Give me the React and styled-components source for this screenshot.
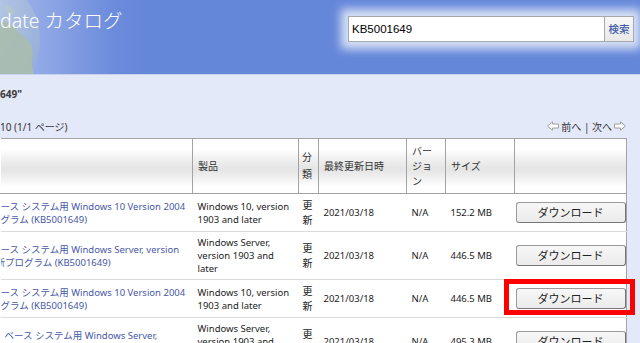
import React from 'react';
import styled, { createGlobalStyle } from 'styled-components';

const GlobalStyle = createGlobalStyle`
  html, body {
    margin: 0;
    padding: 0;
    background: #e3e9f9;
    overflow: hidden;
  }
  body {
    font-family: "Noto Sans", "Noto Sans CJK JP", sans-serif;
    color: #333;
  }
`;

const Page = styled.div`
  width: 640px;
  height: 343px;
  overflow: hidden;
`;

const Header = styled.div`
  position: relative;
  height: 74px;
  display: flex;
  justify-content: space-between;
  align-items: flex-start;
  background: linear-gradient(90deg, #a2b6e9 0px, #8ca5e4 50px, #6b8bdb 115px, #6587da 145px);
  border-bottom: 1px solid #c7d3f1;
`;

const Globe = styled.svg`
  position: absolute;
  left: 0;
  top: 0;
`;

const Title = styled.h1`
  position: relative;
  margin: 7px 0 0 0;
  font-family: "Noto Sans", "Noto Sans CJK JP", sans-serif;
  font-weight: 300;
  font-size: 19.5px;
  line-height: 28px;
  color: #fff;
  white-space: nowrap;
`;

const SearchBox = styled.div`
  display: flex;
  margin: 16px 6px 0 0;
  box-shadow: 0 0 9px 7px rgba(255, 255, 255, 0.75);
`;

const SearchInput = styled.div`
  box-sizing: border-box;
  width: 257px;
  height: 26px;
  padding: 0 3px;
  background: #fff;
  border: 1px solid #a8a8a8;
  font-family: "Liberation Sans", Arial, sans-serif;
  font-size: 11.5px;
  line-height: 24px;
  color: #000;
`;

const SearchButton = styled.div`
  box-sizing: border-box;
  width: 29px;
  height: 26px;
  border: 1px solid #a8a8a8;
  border-left: none;
  background: linear-gradient(#f7f7f7, #e9e9e9);
  color: #3d5ca8;
  font-size: 10.5px;
  font-weight: 500;
  line-height: 24px;
  text-align: center;
`;

const Info = styled.div`
  padding: 12px 14px 0 0;
`;

const Query = styled.div`
  font-size: 10px;
  font-weight: 700;
  line-height: 14px;
  color: #3a3a3a;
`;

const ResultRow = styled.div`
  display: flex;
  justify-content: space-between;
  align-items: center;
  height: 14px;
  margin-top: 18px;
  margin-bottom: 5px;
  font-size: 10px;
  color: #333;
`;

const Pager = styled.div`
  display: flex;
  align-items: center;
  gap: 2px;
  font-size: 10px;
  color: #333;
`;

const Table = styled.table`
  width: 626px;
  border-collapse: collapse;
  table-layout: fixed;
  background: #fff;
  border-top: 1px solid #a3a3a3;
  border-right: 1px solid #a3a3a3;
`;

const HeadCell = styled.th`
  height: 54px;
  padding: 0 ${p => p.$pr ?? 5}px 0 ${p => p.$pl ?? 5}px;
  border-left: 1px solid ${p => (p.$first ? 'transparent' : '#a3a3a3')};
  border-bottom: 1px solid #a3a3a3;
  background: linear-gradient(#fff 0%, #fff 18%, #f1f1f1 35%, #e4e4e4 55%, #f1f1f1 72%, #fff 88%);
  font-weight: 400;
  font-size: 10px;
  line-height: ${p => p.$lh ?? 15}px;
  color: #333;
  text-align: left;
  vertical-align: middle;
`;

const Row = styled.tr`
  border-bottom: 1px solid #dadada;
`;

const Cell = styled.td`
  position: relative;
  padding: ${p => p.$pv ?? 4}px ${p => p.$ph ?? 5}px;
  font-size: ${p => p.$fs ?? 9.5}px;
  line-height: ${p => p.$lh ?? 13}px;
  color: #222;
  vertical-align: middle;
  overflow: ${p => (p.$clip ? 'hidden' : 'visible')};
`;

const TitleLine = styled.span`
  display: block;
  white-space: nowrap;
  margin-left: ${p => p.$indent}px;
  color: #4658a8;
`;

const DownloadButton = styled.div`
  box-sizing: border-box;
  width: 110px;
  height: 21px;
  margin: 4px 0;
  border: 1px solid #9a9a9a;
  border-right-color: #767676;
  border-bottom-color: #767676;
  border-radius: 3px;
  background: linear-gradient(#f7f7f7, #ebebeb);
  font-size: 11px;
  line-height: 19px;
  text-align: center;
  color: #222;
`;

const RedFrame = styled.div`
  position: absolute;
  left: -11px;
  top: -1px;
  box-sizing: border-box;
  width: 131px;
  height: 36px;
  border: 5px solid #f00;
  pointer-events: none;
`;

function Arrow({ dir }) {
  const pts = dir === 'left'
    ? '0.5,5 5.5,0.8 5.5,3 11.5,3 11.5,7 5.5,7 5.5,9.2'
    : '11.5,5 6.5,0.8 6.5,3 0.5,3 0.5,7 6.5,7 6.5,9.2';
  return (
    <svg width="12" height="10" viewBox="0 0 12 10">
      <polygon points={pts} fill="#fff" stroke="#a0a0a0" strokeWidth="1" />
    </svg>
  );
}

const rows = [
  {
    title: [
      { t: 'ース システム用 Windows 10 Version 2004', i: 0 },
      { t: 'グラム (KB5001649)', i: 0 },
    ],
    product: ['Windows 10, version', '1903 and later'],
    size: '152.2 MB',
  },
  {
    title: [
      { t: 'ース システム用 Windows Server, version', i: 0 },
      { t: '新プログラム (KB5001649)', i: -5 },
    ],
    product: ['Windows Server,', 'version 1903 and', 'later'],
    size: '446.5 MB',
  },
  {
    title: [
      { t: 'ース システム用 Windows 10 Version 2004', i: 0 },
      { t: 'グラム (KB5001649)', i: 0 },
    ],
    product: ['Windows 10, version', '1903 and later'],
    size: '446.5 MB',
    marked: true,
  },
  {
    title: [
      { t: 'ベース システム用 Windows Server,', i: 4 },
      { t: 'version 20H2 の累積更新プログラム', i: 4 },
    ],
    product: ['Windows Server,', 'version 1903 and', 'later'],
    size: '495.3 MB',
  },
];

export default function App() {
  return (
    <Page>
      <GlobalStyle />
      <Header>
        <Globe width="130" height="74" viewBox="0 0 130 74">
          <defs>
            <radialGradient id="sphere" cx="0.3" cy="0.25" r="0.8">
              <stop offset="0" stopColor="#d6e0f2" />
              <stop offset="0.6" stopColor="#adc0e2" />
              <stop offset="1" stopColor="#97aed9" />
            </radialGradient>
          </defs>
          <circle cx="-28" cy="40" r="68" fill="url(#sphere)" />
          <path
            d="M0 22 C8 20 14 26 18 32 C24 36 30 40 32 48 C34 56 30 64 34 74 L0 74 Z"
            fill="#a8bcae"
            opacity="0.9"
          />
          <path d="M4 6 C10 4 16 8 14 14 C10 16 6 12 4 6 Z" fill="#b7c9c2" opacity="0.6" />
        </Globe>
        <Title>date カタログ</Title>
        <SearchBox>
          <SearchInput>KB5001649</SearchInput>
          <SearchButton>検索</SearchButton>
        </SearchBox>
      </Header>

      <Info>
        <Query>649"</Query>
        <ResultRow>
          <span>10 (1/1 ページ)</span>
          <Pager>
            <Arrow dir="left" />
            <span>前へ | 次へ</span>
            <Arrow dir="right" />
          </Pager>
        </ResultRow>

        <Table>
          <colgroup>
            <col style={{ width: 192 }} />
            <col style={{ width: 106 }} />
            <col style={{ width: 20 }} />
            <col style={{ width: 88 }} />
            <col style={{ width: 39 }} />
            <col style={{ width: 69 }} />
            <col style={{ width: 112 }} />
          </colgroup>
          <thead>
            <tr>
              <HeadCell $first />
              <HeadCell>製品</HeadCell>
              <HeadCell $pl={3} $pr={3} $lh={17}>分類</HeadCell>
              <HeadCell>最終更新日時</HeadCell>
              <HeadCell $pr={10}>バージョン</HeadCell>
              <HeadCell>サイズ</HeadCell>
              <HeadCell />
            </tr>
          </thead>
          <tbody>
            {rows.map((r, idx) => (
              <Row key={idx}>
                <Cell $ph={0} $clip>
                  {r.title.map((l, j) => (
                    <TitleLine key={j} $indent={l.i}>{l.t}</TitleLine>
                  ))}
                </Cell>
                <Cell>
                  {r.product.map((p, j) => (
                    <div key={j}>{p}</div>
                  ))}
                </Cell>
                <Cell $ph={4} $pv={2} $lh={15} $fs={10}>更新</Cell>
                <Cell>2021/03/18</Cell>
                <Cell>N/A</Cell>
                <Cell>{r.size}</Cell>
                <Cell $ph={1}>
                  <DownloadButton>ダウンロード</DownloadButton>
                  {r.marked && <RedFrame />}
                </Cell>
              </Row>
            ))}
          </tbody>
        </Table>
      </Info>
    </Page>
  );
}
